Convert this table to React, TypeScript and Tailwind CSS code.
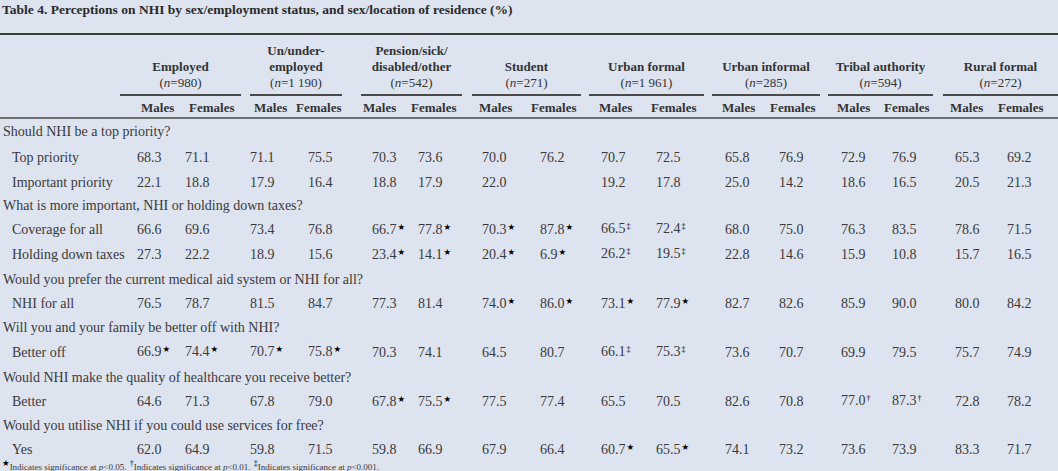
const groups = [
  { lines: ["Employed"], n: "980", cls: "w-[121px]" },
  { lines: ["Un/under-", "employed"], n: "1 190", cls: "w-[92px] ml-[9px]" },
  { lines: ["Pension/sick/", "disabled/other"], n: "542", cls: "w-[101px] ml-[19px]" },
  { lines: ["Student"], n: "271", cls: "w-[109px] ml-[10px]" },
  { lines: ["Urban formal"], n: "1 961", cls: "w-[115px] ml-[8px]" },
  { lines: ["Urban informal"], n: "285", cls: "w-[108px] ml-[8px]" },
  { lines: ["Tribal authority"], n: "594", cls: "w-[105px] ml-[8px]" },
  { lines: ["Rural formal"], n: "272", cls: "w-[115px] ml-[10px]" },
];

const sections = [
  {
    q: "Should NHI be a top priority?",
    h: "h-[25px]",
    rows: [
      { label: "Top priority", h: "h-[27px]", vals: "68.3 71.1 71.1 75.5 70.3 73.6 70.0 76.2 70.7 72.5 65.8 76.9 72.9 76.9 65.3 69.2" },
      { label: "Important priority", h: "h-[24px]", vals: "22.1 18.8 17.9 16.4 18.8 17.9 22.0 - 19.2 17.8 25.0 14.2 18.6 16.5 20.5 21.3" },
    ],
  },
  {
    q: "What is more important, NHI or holding down taxes?",
    h: "h-[22px]",
    rows: [
      { label: "Coverage for all", h: "h-[26px]", vals: "66.6 69.6 73.4 76.8 66.7* 77.8* 70.3* 87.8* 66.5‡ 72.4‡ 68.0 75.0 76.3 83.5 78.6 71.5" },
      { label: "Holding down taxes", h: "h-[24px]", vals: "27.3 22.2 18.9 15.6 23.4* 14.1* 20.4* 6.9* 26.2‡ 19.5‡ 22.8 14.6 15.9 10.8 15.7 16.5" },
    ],
  },
  {
    q: "Would you prefer the current medical aid system or NHI for all?",
    h: "h-[25px]",
    rows: [
      { label: "NHI for all", h: "h-[24px]", vals: "76.5 78.7 81.5 84.7 77.3 81.4 74.0* 86.0* 73.1* 77.9* 82.7 82.6 85.9 90.0 80.0 84.2" },
    ],
  },
  {
    q: "Will you and your family be better off with NHI?",
    h: "h-[24px]",
    rows: [
      { label: "Better off", h: "h-[25px]", vals: "66.9* 74.4* 70.7* 75.8* 70.3 74.1 64.5 80.7 66.1‡ 75.3‡ 73.6 70.7 69.9 79.5 75.7 74.9" },
    ],
  },
  {
    q: "Would NHI make the quality of healthcare you receive better?",
    h: "h-[25px]",
    rows: [
      { label: "Better", h: "h-[24px]", vals: "64.6 71.3 67.8 79.0 67.8* 75.5* 77.5 77.4 65.5 70.5 82.6 70.8 77.0† 87.3† 72.8 78.2" },
    ],
  },
  {
    q: "Would you utilise NHI if you could use services for free?",
    h: "h-[24px]",
    rows: [
      { label: "Yes", h: "h-[24px]", vals: "62.0 64.9 59.8 71.5 59.8 66.9 67.9 66.4 60.7* 65.5* 74.1 73.2 73.6 73.9 83.3 71.7" },
    ],
  },
];

const dataCols =
  "grid grid-cols-[137px_48px_65px_58px_64px_46px_64px_58px_61px_55px_69px_54px_62px_51px_63px_52px_51px]";
const sexCols =
  "grid grid-cols-[141px_48px_65px_42px_67px_48px_68px_52px_68px_52px_71px_48px_67px_47px_66px_48px_1fr]";

function Mark({ m }: { m: string }) {
  if (m === "*")
    return <span className="relative -top-[4px] ml-[1px] text-[8.5px] text-black font-['DejaVu_Sans',sans-serif]">★</span>;
  return <span className="relative -top-[4px] ml-[1px] text-[8px] text-black">{m}</span>;
}

function Val({ v }: { v: string }) {
  if (v === "-") return <span />;
  const last = v.slice(-1);
  if ("*†‡".includes(last)) {
    return (
      <span className="whitespace-nowrap">
        {v.slice(0, -1)}
        <Mark m={last} />
      </span>
    );
  }
  return <span>{v}</span>;
}

export default function App() {
  return (
    <div className="w-[1058px] h-[471px] overflow-hidden bg-[#dde3ef] text-[#3a3a3a] font-['Liberation_Serif',serif]">
      <div className="h-[33px] pl-[2px] pt-[1px] text-[13.5px] leading-[18px] font-bold text-[#2a2a2a]">
        Table 4. Perceptions on NHI by sex/employment status, and sex/location of residence (%)
      </div>

      <div className="border-t-2 border-[#3c3c3c]">
        <div className="flex items-end h-[61px] pl-[120px]">
          {groups.map((g) => (
            <div
              key={g.n}
              className={`${g.cls} flex flex-col items-center border-b-2 border-[#4a4a4a] pb-[3px] text-[13px] leading-[16px] font-bold text-[#333]`}
            >
              {g.lines.map((l) => (
                <div key={l} className="whitespace-nowrap">{l}</div>
              ))}
              <div className="font-normal whitespace-nowrap">
                (<i>n</i>={g.n})
              </div>
            </div>
          ))}
        </div>
        <div className={`${sexCols} h-[21px] pt-[4px] text-[13px] leading-[16px] font-bold text-[#333]`}>
          <div />
          {groups.flatMap((g) => [
            <div key={g.n + "m"} className="whitespace-nowrap">Males</div>,
            <div key={g.n + "f"} className="whitespace-nowrap">Females</div>,
          ])}
          <div />
        </div>
      </div>

      <div className="border-t-[2.5px] border-[#6f6f6f] text-[14px] leading-[16px]">
        {sections.map((s) => (
          <div key={s.q}>
            <div className={`${s.h} flex items-center pl-[3px]`}>{s.q}</div>
            {s.rows.map((r) => (
              <div key={r.label} className={`${dataCols} ${r.h} items-center`}>
                <div className="pl-[12px] whitespace-nowrap">{r.label}</div>
                {r.vals.split(" ").map((v, i) => (
                  <Val key={i} v={v} />
                ))}
              </div>
            ))}
          </div>
        ))}
      </div>

      <div className="pl-[1px] text-[9px] leading-[11px] text-[#3a3a3a]">
        <Mark m="*" />Indicates significance at <i>p</i>&lt;0.05. <Mark m="†" />Indicates significance at <i>p</i>&lt;0.01.{" "}
        <Mark m="‡" />Indicates significance at <i>p</i>&lt;0.001.
      </div>
    </div>
  );
}
